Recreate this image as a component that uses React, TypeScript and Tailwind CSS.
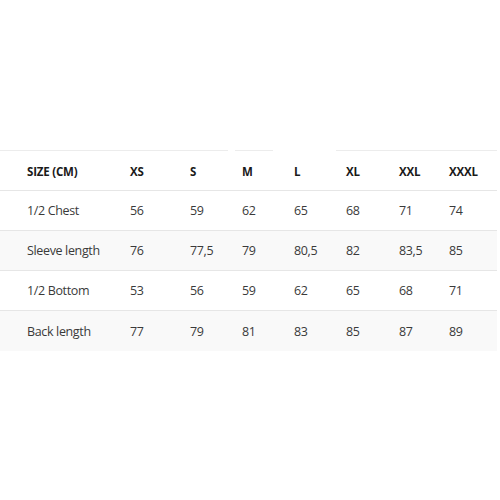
import React from "react";

const header = ["SIZE (CM)", "XS", "S", "M", "L", "XL", "XXL", "XXXL"];
const rows: string[][] = [
  ["1/2 Chest", "56", "59", "62", "65", "68", "71", "74"],
  ["Sleeve length", "76", "77,5", "79", "80,5", "82", "83,5", "85"],
  ["1/2 Bottom", "53", "56", "59", "62", "65", "68", "71"],
  ["Back length", "77", "79", "81", "83", "85", "87", "89"],
];

const grid = "grid grid-cols-[103px_60px_52px_52px_52px_53px_50px_75px] h-[40px] items-center";

export default function App() {
  return (
    <div className="w-[500px] h-[500px] bg-white pt-[150px]" style={{ fontFamily: '"Open Sans", sans-serif' }}>
      <div className="w-[497px]">
        <div className="flex h-px">
          <div className="w-[228px] bg-[#ececec]" />
          <div className="w-[7px]" />
          <div className="w-[38px] bg-[#ececec]" />
          <div className="w-[63px]" />
          <div className="flex-1 bg-[#ececec]" />
        </div>
        <div className={`${grid} h-[39px] border-b border-[#e6e6e6]`}>
          {header.map((h) => (
            <div key={h} className="pl-[27px] pt-[2px] text-[11.5px] font-bold tracking-[-0.2px] text-[#1a1a1a] whitespace-nowrap">
              {h}
            </div>
          ))}
        </div>
        {rows.map((r, i) => (
          <div
            key={r[0]}
            className={`${grid} ${i < rows.length - 1 ? "border-b border-[#e6e6e6]" : ""} ${i % 2 === 1 ? "bg-[#f9f9f9]" : "bg-white"}`}
          >
            {r.map((c, j) => (
              <div key={j} className="pl-[27px] pt-[2px] text-[12.5px] tracking-[-0.35px] text-[#3a3a3a] whitespace-nowrap">
                {c}
              </div>
            ))}
          </div>
        ))}
      </div>
    </div>
  );
}
